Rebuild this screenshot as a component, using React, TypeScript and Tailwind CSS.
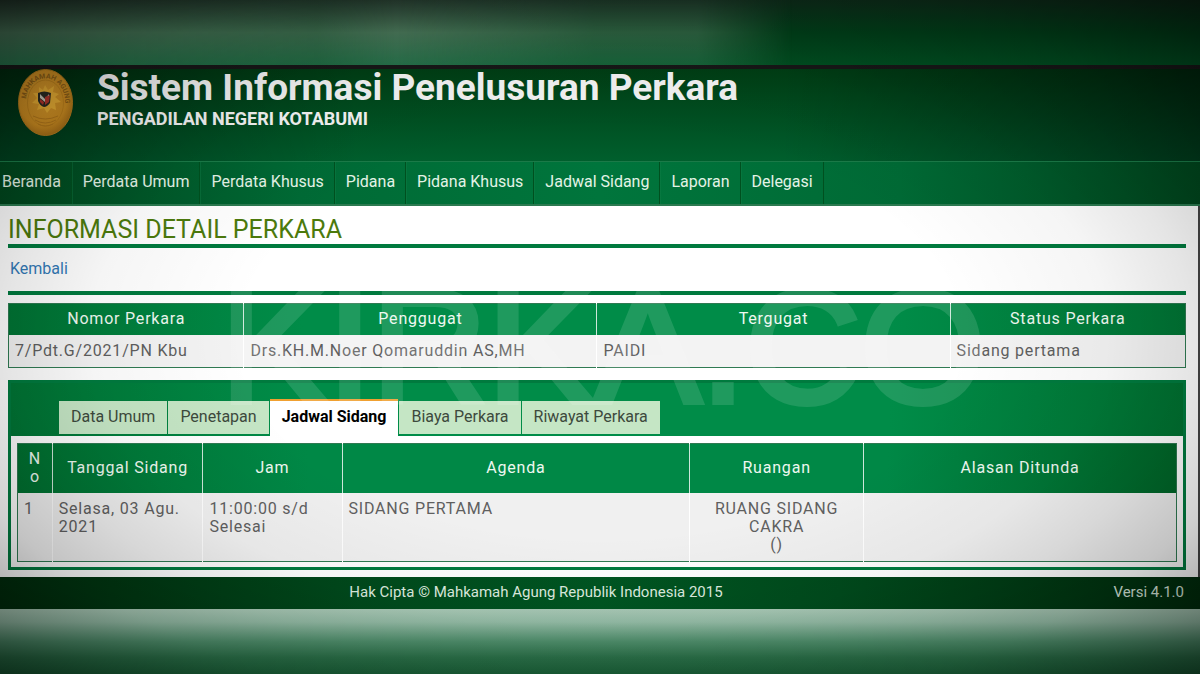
import clsx from 'clsx'

const menu = ['Perdata Umum', 'Perdata Khusus', 'Pidana', 'Pidana Khusus', 'Jadwal Sidang', 'Laporan', 'Delegasi']

const tabs = ['Data Umum', 'Penetapan', 'Jadwal Sidang', 'Biaya Perkara', 'Riwayat Perkara']

const perkara = [
  { label: 'Nomor Perkara', value: '7/Pdt.G/2021/PN Kbu', width: 'w-[20%]' },
  { label: 'Penggugat', value: 'Drs.KH.M.Noer Qomaruddin AS,MH', width: 'w-[30%]' },
  { label: 'Tergugat', value: 'PAIDI', width: 'w-[30%]' },
  { label: 'Status Perkara', value: 'Sidang pertama', width: 'w-[20%]' },
]

const sidangCols = [
  { label: 'No', width: 'w-[3%]' },
  { label: 'Tanggal Sidang', width: 'w-[13%]' },
  { label: 'Jam', width: 'w-[12%]' },
  { label: 'Agenda', width: 'w-[30%]' },
  { label: 'Ruangan', width: 'w-[15%]' },
  { label: 'Alasan Ditunda', width: 'w-[27%]' },
]

const th = 'px-1.5 pt-1.5 pb-[7px] font-normal text-center align-middle text-[#eef8f0] border-l border-white/80 first:border-l-0 break-all'
const td = 'px-1.5 py-[7px] align-top border-l border-white first:border-l-0'

function Emblem() {
  return (
    <svg viewBox="0 0 55 67" className="w-[55px] h-[67px] shrink-0" role="img" aria-label="Mahkamah Agung">
      <defs>
        <radialGradient id="gold" cx="45%" cy="40%" r="65%">
          <stop offset="0%" stopColor="#d99a2b" />
          <stop offset="70%" stopColor="#c98a20" />
          <stop offset="100%" stopColor="#9a6414" />
        </radialGradient>
        <path id="arc" d="M8 38 C5 0 50 0 47 38" />
      </defs>
      <ellipse cx="27.5" cy="33.5" rx="27" ry="33" fill="url(#gold)" stroke="#b37a1c" />
      <ellipse cx="27.5" cy="34" rx="18" ry="23" fill="none" stroke="#b87c1a" strokeWidth="0.8" />
      <text fontSize="7" fontWeight="700" fill="#8a5d16" fontFamily="Roboto, sans-serif">
        <textPath href="#arc" startOffset="8">MAHKAMAH AGUNG</textPath>
      </text>
      <path
        d="M27 16 L30 21 L36 17 L35 23 L41 25 L37 28 L43 33 L37 34 L38 41 L33 39 L29 44 L26 39 L19 41 L21 35 L14 34 L19 29 L15 24 L21 24 L21 18 L25 21 Z"
        fill="#e6ac33"
      />
      <path d="M20 24 Q26 21 33 24 L32 34 Q29 38 26 38 Q22 37 20 32 Z" fill="#2a2a22" />
      <path d="M22 25 L27 30 L31 25 L31 28 L27 33 L22 29 Z" fill="#c9c4b6" />
      <path d="M27 28 L32 26 L31 33 L27 36 Z" fill="#b1342b" />
      <path d="M22 30 L26 33 L25 36 L22 33 Z" fill="#b1342b" />
      <path d="M15 47 Q27 53 40 47 M17 51 Q27 57 38 51 M20 55 Q27 59 35 55" fill="none" stroke="#b1761a" strokeWidth="1" />
    </svg>
  )
}

export default function App() {
  return (
    <div className="relative min-h-screen flex flex-col overflow-hidden bg-[#005a28] font-[Roboto,sans-serif] text-base leading-[18px]">
      {/* Blurred top strip */}
      <div className="h-[65px] bg-[linear-gradient(to_bottom,#0c2a18_0%,#003d18_50%,#004d20_100%)]">
        <div className="h-full w-[66%] bg-[linear-gradient(to_bottom,#253a2e_0%,#487558_50%,#26704a_100%)] [mask-image:linear-gradient(to_right,#000_0%,#000c_40%,#000_50%,#0009_75%,#0009_88%,transparent_100%)]"></div>
      </div>

      <div className="border-t-4 border-[#171717]">
        {/* Header */}
        <header className="h-[92px] px-[18px] flex gap-6 bg-[linear-gradient(to_right,#0005_0%,transparent_30%,transparent_65%,#0006_100%),linear-gradient(to_bottom,#003d14,#005f2d)]">
          <Emblem />
          <div className="text-[#f2f2f2]">
            <p className="text-[37px] leading-[38px] font-bold">Sistem Informasi Penelusuran Perkara</p>
            <p className="text-lg leading-6 font-bold">PENGADILAN NEGERI KOTABUMI</p>
          </div>
        </header>

        {/* Menu */}
        <nav className="flex h-[45px] bg-[linear-gradient(to_right,#00461d_0%,#006a35_25%,#00753c_50%,#006a35_75%,#00461d_100%)] border-t border-[#1b7a48] border-b-2 border-b-[#2b7a50] text-[#e3f3e6]">
          <a href="#" className="flex items-center pb-0.5 pl-0.5 pr-2.5 border-r border-[#00501f]">Beranda</a>
          {menu.map((m) => (
            <a key={m} href="#" className="flex items-center pb-0.5 px-2.5 border-l border-l-[#12804866] border-r border-r-[#00501f]">{m}</a>
          ))}
        </nav>

        {/* Detail */}
        <main className="bg-white border-r-2 border-[#444] pl-2 pr-3 pt-2.5 pb-[7px]">
          <h1 className="text-[25px] leading-7 text-[#4c7a0c] border-b-4 border-[#007a3e]">INFORMASI DETAIL PERKARA</h1>
          <div className="px-0.5 pt-3 pb-[13px] border-b-4 border-[#007a3e]">
            <a href="#" className="text-[#337ab7]">Kembali</a>
          </div>

          <table className="mt-2 w-full table-fixed border-collapse border border-[#2f7a52] tracking-wider text-[#5f5f5f]">
            <thead className="bg-[linear-gradient(to_right,#007434_0%,#008c48_25%,#008c48_75%,#007434_100%)]">
              <tr>
                {perkara.map((p) => (
                  <th key={p.label} scope="col" className={clsx(th, p.width)}>{p.label}</th>
                ))}
              </tr>
            </thead>
            <tbody className="bg-[#f3f3f3]">
              <tr>
                {perkara.map((p) => (
                  <td key={p.label} className={td}>{p.value}</td>
                ))}
              </tr>
            </tbody>
          </table>

          <section className="mt-3 bg-white border-[3px] border-[#007a3e]">
            <div className="h-[53px] pl-12 flex items-end bg-[linear-gradient(to_right,#007434_0%,#008c48_25%,#008c48_75%,#007030_100%)]" role="tablist">
              {tabs.map((t) => (
                <button
                  key={t}
                  role="tab"
                  aria-selected={t === 'Jadwal Sidang'}
                  className={clsx(
                    'px-3 mr-px',
                    t === 'Jadwal Sidang'
                      ? 'h-[37px] pb-1 bg-white text-black font-bold border-t-2 border-[#f0a030]'
                      : 'h-[33px] pb-0.5 mb-0.5 bg-[#c5e6c5] text-[#3d4a3d]'
                  )}
                >
                  {t}
                </button>
              ))}
            </div>
            <div className="px-1.5 pt-[7px] pb-[5px]">
              <table className="w-full table-fixed border-collapse border border-[#2f7a52] tracking-wider text-[#5f5f5f]">
                <thead className="bg-[linear-gradient(to_right,#007030_0%,#008846_25%,#008846_75%,#006628_100%)]">
                  <tr>
                    {sidangCols.map((c) => (
                      <th key={c.label} scope="col" className={clsx(th, c.width)}>{c.label}</th>
                    ))}
                  </tr>
                </thead>
                <tbody className="bg-[#f0f0f0]">
                  <tr>
                    <td className={td}>1</td>
                    <td className={td}>Selasa, 03 Agu. 2021</td>
                    <td className={td}>11:00:00 s/d Selesai</td>
                    <td className={td}>SIDANG PERTAMA</td>
                    <td className={clsx(td, 'text-center')}>RUANG SIDANG CAKRA<br />()</td>
                    <td className={td}></td>
                  </tr>
                </tbody>
              </table>
            </div>
          </section>
        </main>

        <footer className="flex h-8 items-center pr-4 pb-0.5 bg-[linear-gradient(to_right,#002d0c_0%,#004a1c_30%,#005622_50%,#004a1c_70%,#002d0c_100%)] text-[15px] text-[#dcebdf]">
          <span className="flex-1 text-center">Hak Cipta © Mahkamah Agung Republik Indonesia 2015</span>
          <span className="w-28 text-right">Versi 4.1.0</span>
        </footer>
      </div>

      {/* Blurred bottom strip */}
      <div className="flex-1 min-h-16 bg-[linear-gradient(to_bottom,#a9c9b6_0%,#94bca6_20%,#4f8f6c_50%,#2a7048_75%,#1a6038_100%)]">
        <div className="h-full bg-[linear-gradient(to_right,#004a1e_0%,#004a1e_22%,#004a1e22_28%,#004a1e33_36%,#004a1ebb_39%,#004a1e66_45%,#004a1e44_60%,#004a1ecc_65%,#004a1e_100%)] [mask-image:linear-gradient(to_bottom,transparent_5%,#000_65%)]"></div>
      </div>

      {/* Watermark and vignette over the page */}
      <div aria-hidden="true" className="absolute inset-0 pt-5 pl-1.5 flex items-center justify-center pointer-events-none">
        <span className="opacity-[0.12] text-[160px] leading-none text-white [-webkit-text-stroke:6px_white] font-['Liberation_Sans',sans-serif]">KIRKA.CO</span>
      </div>
      <div className="absolute inset-0 pointer-events-none bg-[radial-gradient(ellipse_at_center,transparent_42%,#0000000a_60%,#0000001a_70%,#00000030_80%,#00000055_90%,#00000080_100%)]"></div>
    </div>
  )
}
